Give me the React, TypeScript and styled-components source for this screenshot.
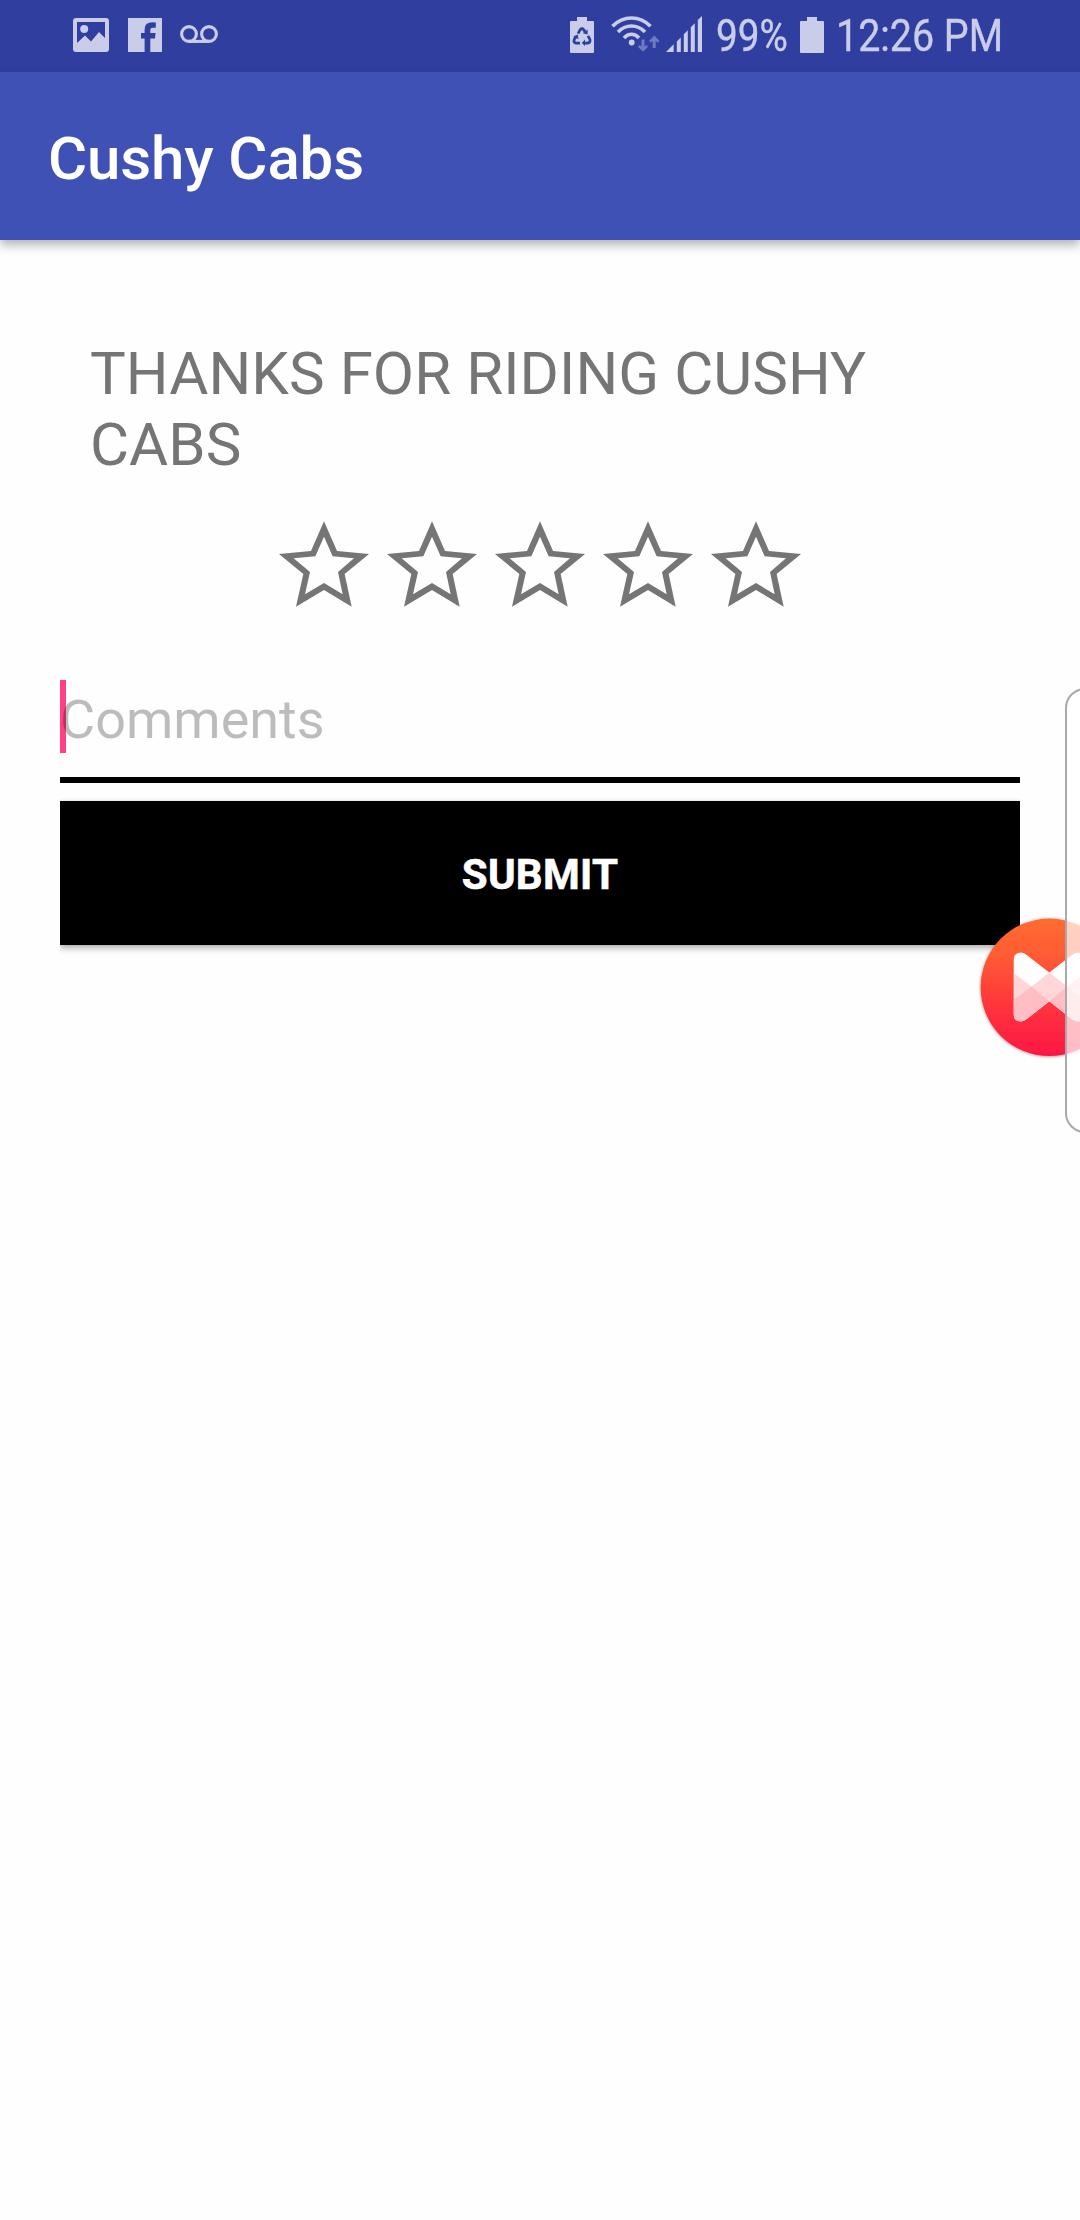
import React from "react";
import styled, { createGlobalStyle } from "styled-components";

const tint = "#c9cde9";

const GlobalStyle = createGlobalStyle`
  * { box-sizing: border-box; }
  body { margin: 0; background: #fefefe; font-family: Roboto, "Noto Sans", sans-serif; }
`;

const Screen = styled.div`
  position: relative;
  display: flex;
  flex-direction: column;
  width: 1080px;
  height: 2220px;
  overflow: hidden;
  background: #fefefe;
`;

const StatusBar = styled.header`
  display: flex;
  justify-content: space-between;
  height: 72px;
  padding: 0 76px 0 73px;
  background: #303f9f;
  color: ${tint};
`;

const StatusGroup = styled.div`
  display: flex;
  align-items: flex-start;
`;

const Glyph = styled.svg<{ $top: number; $gap?: number }>`
  display: block;
  flex: none;
  margin-top: ${(p) => p.$top}px;
  margin-left: ${(p) => p.$gap ?? 0}px;
  fill: ${tint};
`;

const StatusText = styled.span<{ $width: number; $gap: number; $scale: number }>`
  width: ${(p) => p.$width}px;
  margin-left: ${(p) => p.$gap}px;
  margin-top: 9px;
  font-size: 45px;
  line-height: 54px;
  white-space: nowrap;
  -webkit-text-stroke: 0.4px ${tint};
  transform: scaleX(${(p) => p.$scale});
  transform-origin: left center;
`;

const AppBar = styled.div`
  display: flex;
  align-items: center;
  height: 168px;
  padding: 6px 48px 0;
  background: #3f51b5;
  box-shadow: 0 5px 10px rgba(0, 0, 0, 0.3);
`;

const Title = styled.h1`
  margin: 0;
  color: #fff;
  font-size: 60px;
  font-weight: 500;
  line-height: 70px;
  letter-spacing: -0.12px;
`;

const Content = styled.main`
  display: flex;
  flex-direction: column;
  padding: 98px 60px 0;
`;

const Thanks = styled.p`
  margin: 0 30px;
  color: #757575;
  font-size: 60px;
  line-height: 71px;
  letter-spacing: 0.06px;
`;

const Rating = styled.div`
  display: flex;
  justify-content: center;
  margin-top: 41px;
`;

const Star = styled.svg`
  display: block;
  width: 108px;
  height: 86px;
  fill: #757575;
`;

const Field = styled.div`
  display: flex;
  align-items: flex-start;
  height: 103px;
  margin-top: 73px;
  border-bottom: 6px solid #000;
`;

const Cursor = styled.span`
  width: 6px;
  height: 73px;
  margin-right: -6px;
  background: #ff4081;
`;

const Hint = styled.span`
  position: relative;
  margin-top: 8px;
  color: rgba(0, 0, 0, 0.26);
  font-size: 54px;
  line-height: 64px;
`;

const Submit = styled.button`
  height: 144px;
  margin-top: 18px;
  padding: 2px 0 0;
  border: 0;
  background: #000;
  color: #fff;
  font-family: inherit;
  font-size: 42px;
  font-weight: 700;
  letter-spacing: 0.25px;
  -webkit-text-stroke: 0.6px #fff;
  box-shadow: 0 4px 6px rgba(0, 0, 0, 0.25), 0 0 4px rgba(0, 0, 0, 0.14);
  clip-path: inset(-8px 0 -16px 0);
`;

const Bubble = styled.svg`
  position: absolute;
  left: 976px;
  top: 914px;
  width: 104px;
  height: 148px;
`;

const EdgeHandle = styled.div`
  position: absolute;
  left: 1065px;
  top: 688px;
  width: 40px;
  height: 445px;
  border: 2px solid #a9a9a9;
  border-radius: 20px;
  background: rgba(255, 255, 255, 0.7);
`;

const ImageIcon = () => (
  <Glyph $top={18} width="36" height="34" viewBox="0 0 36 34">
    <path
      fillRule="evenodd"
      d="M3 0H33Q36 0 36 3V31Q36 34 33 34H3Q0 34 0 31V3Q0 0 3 0ZM4 4V25L12 17.5L18 23.5L26 14L32 20V4Z"
    />
    <circle cx="11.2" cy="11" r="4" />
  </Glyph>
);

const FacebookIcon = () => (
  <Glyph $top={18} $gap={19} width="34" height="34" viewBox="0 0 34 34">
    <path d="M0 0H34V34H22.3V20.5H27L27.6 15H22.3V12Q22.3 9.8 24.6 9.8H27.8V4.6Q16.6 3 16.6 11.4V15H13V20.5H16.6V34H0Z" />
  </Glyph>
);

const VoicemailIcon = () => (
  <Glyph $top={25} $gap={18} width="38" height="18" viewBox="0 0 38 18">
    <g fill="none" stroke={tint} strokeWidth="3.1">
      <circle cx="9" cy="9" r="7.4" />
      <circle cx="29" cy="9" r="7.4" />
      <path d="M9 16.4H29" />
    </g>
  </Glyph>
);

const batteryShape = "M7 0H17V4H23Q24 4 24 5V35Q24 36 23 36H1Q0 36 0 35V5Q0 4 1 4H7Z";

const SaverIcon = () => (
  <Glyph $top={17} width="24" height="36" viewBox="0 0 24 36">
    <path d={batteryShape} />
    <g fill="none" stroke="#303f9f" strokeWidth="2.8">
      <path d="M8 16.6L10.3 12.6Q12 10.6 13.7 12.6L15 15" />
      <path d="M18 18.8L19.9 22.4Q20.6 25.9 17.6 26.1H14.5" />
      <path d="M10 26.1H6.2Q3.2 25.7 4.2 22.6L6 19.4" />
    </g>
    <g fill="#303f9f">
      <path d="M17.6 12.6V17.6L12.8 16.2Z" />
      <path d="M15 22.6V29L11.8 26Z" />
      <path d="M3.2 19.4L7.8 17.6L8.4 22.2Z" />
    </g>
  </Glyph>
);

const WifiIcon = () => (
  <Glyph $top={15} $gap={17} width="50" height="38" viewBox="0 0 50 38">
    <g fill="none" stroke={tint} strokeWidth="3.6">
      <path d="M1.5 11.3Q9.5 3 20.5 3T39.5 11.3" />
      <path d="M7 17Q12.8 11 20.5 11T34 17" />
      <path d="M13 23Q16.3 19.3 20.5 19.3T28 23" />
    </g>
    <circle cx="20.7" cy="27.5" r="2.9" />
    <g fill="#6f7ac2">
      <path d="M30.5 24.5H33.5V31.5L35.6 29.9L37 31.8L32 36.8L27 31.8L28.4 29.9L30.5 31.5Z" />
      <path d="M41.7 33V26L39.6 27.7L38.2 25.8L43.2 20.4L48.4 25.8L47 27.7L44.7 26V33Z" />
    </g>
  </Glyph>
);

const SignalIcon = () => (
  <Glyph $top={16} $gap={5} width="36" height="36" viewBox="0 0 36 36">
    <path d="M0 36L7.7 28.3V36ZM10.8 25.5L14.8 21.5V36H10.8ZM17.8 18.3L21.8 14.3V36H17.8ZM24.8 11.3L28.8 7.3V36H24.8ZM31.8 4L36 0V36H31.8Z" />
  </Glyph>
);

const BatteryIcon = () => (
  <Glyph $top={17} $gap={11} width="24" height="36" viewBox="0 0 24 36">
    <path d={batteryShape} />
  </Glyph>
);

const StarOutline = () => (
  <Star viewBox="30 62 324 258">
    <path
      fillRule="evenodd"
      d="M192 63L231 152L327 161L254 221L275 319L192 269L108 319L130 221L57 161L153 152ZM192 109L166 168L101 174L150 215L135 282L192 248L248 282L234 215L282 174L218 168Z"
    />
  </Star>
);

const ChatBubble = () => (
  <Bubble viewBox="976 914 104 148">
    <defs>
      <linearGradient id="bubbleFill" x1="0" y1="0" x2="0" y2="1">
        <stop offset="0" stopColor="#ff6b2f" />
        <stop offset="0.25" stopColor="#ff5d34" />
        <stop offset="0.65" stopColor="#ff333c" />
        <stop offset="1" stopColor="#fd1745" />
      </linearGradient>
      <filter id="bubbleShadow" x="-10%" y="-10%" width="120%" height="120%">
        <feDropShadow dx="0" dy="0.5" stdDeviation="1.6" floodOpacity="0.45" />
      </filter>
      <clipPath id="bow">
        <path d="M1013.7 960Q1013.7 952.8 1021 952.6Q1024 952.8 1027 955.2L1049.3 972.5L1071.6 955.2Q1074.6 952.8 1077.6 952.6Q1085 952.8 1085 960V1014Q1085 1021.2 1077.6 1021.4Q1074.6 1021.2 1071.6 1018.8L1049.3 1001.2L1027 1018.8Q1024 1021.2 1021 1021.4Q1013.7 1021.2 1013.7 1014Z" />
      </clipPath>
    </defs>
    <circle cx="1049.3" cy="987.3" r="68.7" fill="url(#bubbleFill)" filter="url(#bubbleShadow)" />
    <g clipPath="url(#bow)">
      <rect x="1010" y="950" width="80" height="75" fill="#fff" />
      <path d="M1013.7 973L1031.5 986.5L1049.3 972.5L1067 986.5L1085 973V1025H1013.7Z" fill="#ffd7d8" />
      <path d="M1013.7 1000L1031.5 986.5L1049.3 1001.2L1067 986.5L1085 1000V1025H1013.7Z" fill="#ffbec4" />
    </g>
  </Bubble>
);

export default function App() {
  return (
    <Screen>
      <GlobalStyle />
      <StatusBar>
        <StatusGroup>
          <ImageIcon />
          <FacebookIcon />
          <VoicemailIcon />
        </StatusGroup>
        <StatusGroup>
          <SaverIcon />
          <WifiIcon />
          <SignalIcon />
          <StatusText $width={73} $gap={14} $scale={0.86}>99%</StatusText>
          <BatteryIcon />
          <StatusText $width={168} $gap={12} $scale={0.875}>12:26 PM</StatusText>
        </StatusGroup>
      </StatusBar>
      <AppBar>
        <Title>Cushy Cabs</Title>
      </AppBar>
      <Content>
        <Thanks>THANKS FOR RIDING CUSHY CABS</Thanks>
        <Rating>
          {[1, 2, 3, 4, 5].map((n) => (
            <StarOutline key={n} />
          ))}
        </Rating>
        <Field>
          <Cursor />
          <Hint>Comments</Hint>
        </Field>
        <Submit>SUBMIT</Submit>
      </Content>
      <ChatBubble />
      <EdgeHandle />
    </Screen>
  );
}
